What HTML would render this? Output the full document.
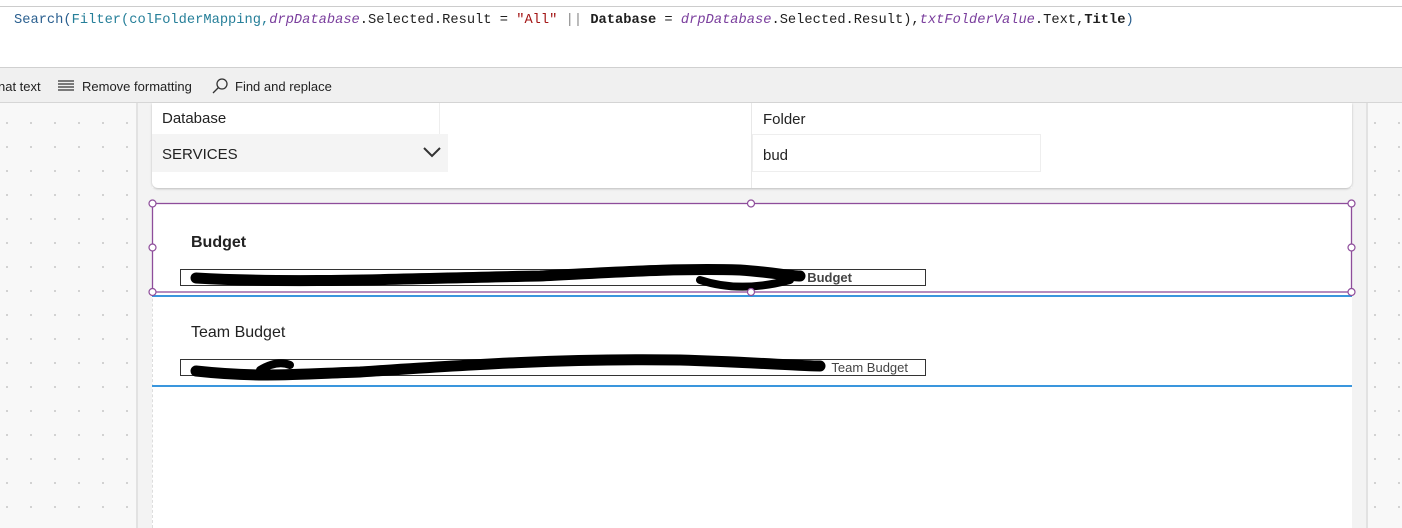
<!DOCTYPE html>
<html><head><style>
body{margin:0;width:1402px;height:528px;overflow:hidden;position:relative;background:#fff;font-family:"Liberation Sans",sans-serif}
.a{position:absolute}
.mono{font-family:"Liberation Mono",monospace;font-size:13.72px}
.dots{background-color:#f8f8f8;background-image:radial-gradient(circle,#cfcfcf 1px,transparent 1.2px);background-size:24px 24px;background-position:-5px 8px}
</style></head><body>
<div class="a" style="left:0;top:0;width:1402px;height:6px;background:#fff;border-bottom:1px solid #ccc"></div>
<div class="a mono" style="left:14px;top:13px;white-space:pre;color:#1f1f1f"><span style="color:#2a5f8f">Search(</span><span style="color:#267f99">Filter(colFolderMapping,</span><i style="color:#7a3e9d">drpDatabase</i>.Selected.Result = <span style="color:#a31515">"All"</span> <span style="color:#888">||</span> <b>Database</b> = <i style="color:#7a3e9d">drpDatabase</i>.Selected.Result),<i style="color:#7a3e9d">txtFolderValue</i>.Text,<b>Title</b><span style="color:#2a5f8f">)</span></div>
<div class="a" style="left:0;top:67px;width:1402px;height:36px;background:#f0f0f0;border-top:1px solid #d0d0d0;border-bottom:1px solid #d6d6d6;box-sizing:border-box;font-size:13px;color:#222">
<span class="a" style="left:-2px;top:11px">nat text</span>
<svg class="a" style="left:57px;top:11px" width="18" height="14"><path d="M1 2H17M1 5H17M1 8H17M1 11H17" stroke="#333" stroke-width="1.3"/></svg>
<span class="a" style="left:82px;top:11px">Remove formatting</span>
<svg class="a" style="left:211px;top:9px" width="18" height="18"><circle cx="11" cy="7" r="5" fill="none" stroke="#333" stroke-width="1.3"/><path d="M7.5 10.5L2 16" stroke="#333" stroke-width="1.3"/></svg>
<span class="a" style="left:235px;top:11px">Find and replace</span>
</div>
<div class="a dots" style="left:0;top:103px;width:136px;height:425px"></div>
<div class="a" style="left:136px;top:103px;width:2px;height:425px;background:#e2e2e2"></div>
<div class="a" style="left:138px;top:103px;width:14px;height:425px;background:#f3f3f3"></div>
<div class="a" style="left:1352px;top:103px;width:14px;height:425px;background:#f3f3f3"></div>
<div class="a" style="left:1366px;top:103px;width:2px;height:425px;background:#e2e2e2"></div>
<div class="a dots" style="left:1368px;top:103px;width:34px;height:425px"></div>
<div class="a" style="left:152px;top:188px;width:1200px;height:15px;background:#f3f3f3"></div>
<div class="a" style="left:152px;top:103px;width:1200px;height:85px;background:#fff;border-radius:0 0 6px 6px;box-shadow:0 1px 2px #bbb"></div>
<div class="a" style="left:751px;top:103px;width:1px;height:85px;background:#e8e8e8"></div>
<div class="a" style="left:439px;top:103px;width:1px;height:31px;background:#eee"></div>
<div class="a" style="left:162px;top:110px;font-size:15px;color:#222">Database</div>
<div class="a" style="left:152px;top:134px;width:296px;height:38px;background:#f4f4f4"></div>
<div class="a" style="left:162px;top:146px;font-size:15px;color:#222">SERVICES</div>
<svg class="a" style="left:422px;top:146px" width="20" height="13"><path d="M2 2L10 10L18 2" fill="none" stroke="#333" stroke-width="2"/></svg>
<div class="a" style="left:763px;top:111px;font-size:15px;color:#222">Folder</div>
<div class="a" style="left:752px;top:134px;width:287px;height:36px;border:1px solid #eee"></div>
<div class="a" style="left:763px;top:147px;font-size:15px;color:#222">bud</div>
<div class="a" style="left:152px;top:203px;width:1200px;height:325px;background:#fff;border-left:1px dashed #ddd;box-sizing:border-box"></div>
<div class="a" style="left:152px;top:295px;width:1200px;height:2px;background:#3a96dd"></div>
<div class="a" style="left:152px;top:385px;width:1200px;height:2px;background:#3a96dd"></div>
<div class="a" style="left:191px;top:234px;font-size:16px;font-weight:bold;color:#222">Budget</div>
<div class="a" style="left:191px;top:324px;font-size:16px;color:#222">Team Budget</div>
<div class="a" style="left:180px;top:269px;width:746px;height:17px;border:1px solid #333;font-size:13px;font-weight:bold;color:#444;text-align:right;padding-right:73px;box-sizing:border-box;line-height:16px">Budget</div>
<div class="a" style="left:180px;top:359px;width:746px;height:17px;border:1px solid #333;font-size:13px;color:#444;text-align:right;padding-right:17px;box-sizing:border-box;line-height:16px">Team Budget</div>
<svg class="a" style="left:0;top:0" width="1402" height="528">
<path d="M196 278C300 284 420 278 540 276C620 272 680 268 740 270C770 272 790 276 800 276" fill="none" stroke="#000" stroke-width="11" stroke-linecap="round"/>
<path d="M700 280C730 290 760 288 790 280" fill="none" stroke="#000" stroke-width="8" stroke-linecap="round"/>
<path d="M196 371C260 378 300 374 360 372C450 366 560 358 680 360C750 362 800 366 820 366" fill="none" stroke="#000" stroke-width="11" stroke-linecap="round"/>
<path d="M260 370C270 364 280 361 290 365" fill="none" stroke="#000" stroke-width="8" stroke-linecap="round"/>
<rect x="152.5" y="203.5" width="1199" height="88.5" fill="none" stroke="#8e4d9b" stroke-width="1.3"/>
<g fill="#fff" stroke="#8e4d9b" stroke-width="1.2">
<circle cx="152.5" cy="203.5" r="3.5"/><circle cx="751" cy="203.5" r="3.5"/><circle cx="1351.5" cy="203.5" r="3.5"/>
<circle cx="152.5" cy="247.5" r="3.5"/><circle cx="1351.5" cy="247.5" r="3.5"/>
<circle cx="152.5" cy="292" r="3.5"/><circle cx="751" cy="292" r="3.5"/><circle cx="1351.5" cy="292" r="3.5"/>
</g>
</svg>
</body></html>
